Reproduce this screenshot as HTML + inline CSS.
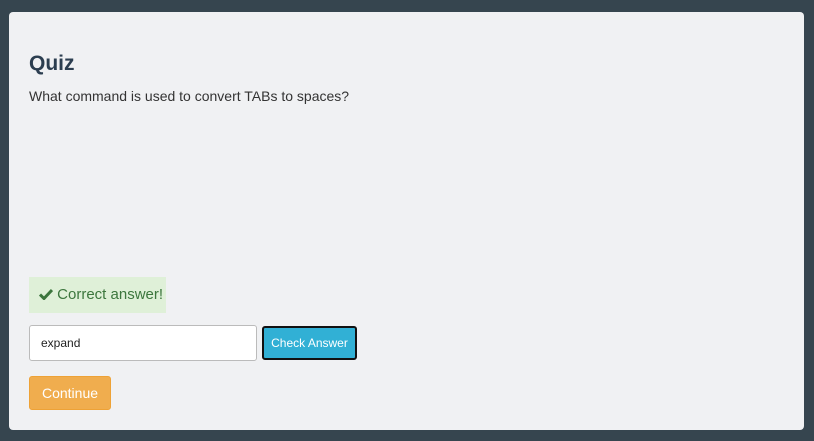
<!DOCTYPE html>
<html><head><style>
*{box-sizing:border-box;margin:0;padding:0}
body{width:814px;height:441px;background:#36454f;font-family:"Liberation Sans",sans-serif;position:relative;overflow:hidden}
.panel{position:absolute;left:9px;top:12px;width:795px;height:418px;background:#f0f1f3;border-radius:4px}
h1{position:absolute;left:29px;top:52px;font-size:21px;font-weight:bold;color:#2c3e50}
.q{position:absolute;left:29px;top:88px;font-size:14px;color:#333}
.alert{position:absolute;left:29px;top:277px;width:137px;height:36px;background:#dff0d8;color:#3c763d;font-size:15px;line-height:36px;padding-left:10px}
.inp{position:absolute;left:29px;top:325px;width:228px;height:36px;background:#fff;border:1px solid #bbb;border-radius:3px;font-size:12px;line-height:34px;padding-left:11px;color:#222}
.btn{position:absolute;left:262px;top:326px;width:95px;height:34px;background:#31b0d5;border:2px solid #111;border-radius:3px;color:#fff;font-size:12px;line-height:30px;text-align:center}
.cont{position:absolute;left:29px;top:376px;width:82px;height:34px;background:#f0ad4e;border:1px solid #eea236;border-radius:3px;color:#fff;font-size:14px;line-height:32px;text-align:center}
</style></head><body>
<div class="panel"></div>
<h1>Quiz</h1>
<div class="q">What command is used to convert TABs to spaces?</div>
<div class="alert"><svg width="14" height="12" viewBox="0 0 14 12" style="vertical-align:-1px"><path d="M1 6.5L5 10.5L13 2" stroke="#3c763d" stroke-width="3" fill="none"/></svg> Correct answer!</div>
<div class="inp">expand</div>
<div class="btn">Check Answer</div>
<div class="cont">Continue</div>
</body></html>
